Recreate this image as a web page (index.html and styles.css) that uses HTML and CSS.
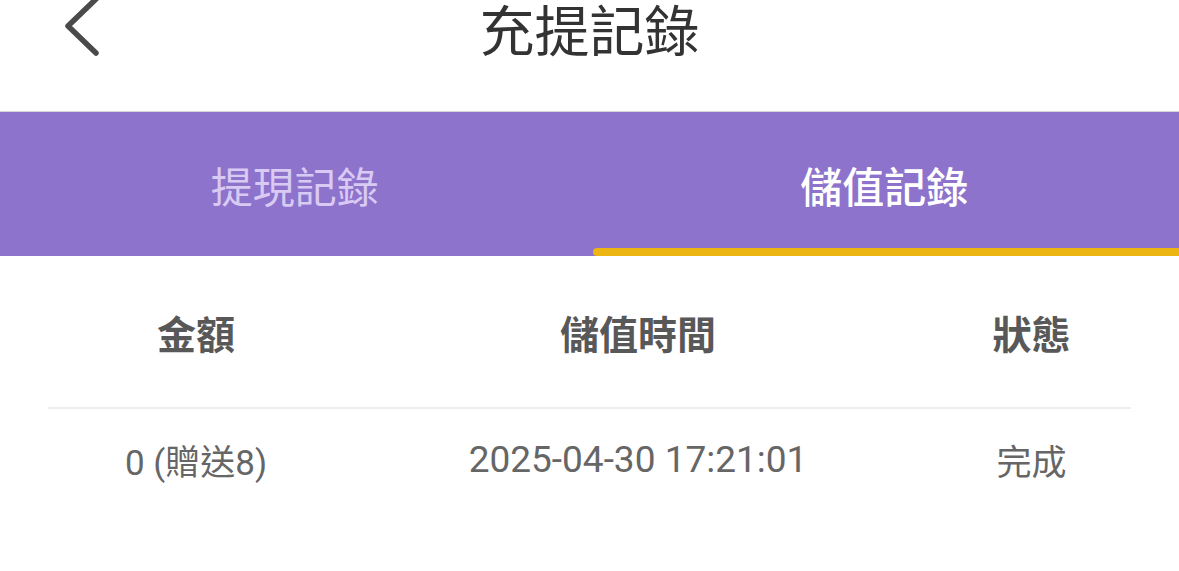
FILE: index.html
```html
<!DOCTYPE html>
<html lang="zh-Hant">
<head>
    <meta charset="UTF-8">
    <meta name="viewport" content="width=device-width, initial-scale=1.0">
    <title>充提記錄</title>
    <link rel="stylesheet" href="styles.css">
</head>
<body>
    <div class="header">
        <span class="back">
            <svg width="40" height="60" viewBox="0 0 40 60">
                <path d="M34 3 L6 30 L34 57" fill="none" stroke="#4a4a4a" stroke-width="5.5" stroke-linecap="round" stroke-linejoin="round"/>
            </svg>
        </span>
        <h1 class="title">充提記錄</h1>
    </div>
    <div class="tabs">
        <div class="tab">提現記錄</div>
        <div class="tab active">儲值記錄</div>
    </div>
    <div class="table">
        <div class="row head">
            <div class="cell">金額</div>
            <div class="cell">儲值時間</div>
            <div class="cell">狀態</div>
        </div>
        <div class="row">
            <div class="cell">0 (贈送8)</div>
            <div class="cell date">2025-04-30 17:21:01</div>
            <div class="cell">完成</div>
        </div>
    </div>
</body>
</html>
```

FILE: styles.css
```css
body {
    margin: 0;
    font-family: Roboto, "Noto Sans CJK TC", sans-serif;
    background: #ffffff;
    overflow: hidden;
}
.header {
    position: relative;
    height: 111px;
    border-bottom: 1px solid #d4d4d4;
    text-align: center;
}
.back {
    position: absolute;
    left: 62px;
    top: -4px;
}
.title {
    margin: 0;
    font-family: "Noto Sans CJK TC", sans-serif;
    font-weight: 400;
    font-size: 55px;
    line-height: 54px;
    color: #333;
}
.tabs {
    display: flex;
    height: 144px;
    background: #8e73cc;
}
.tab {
    flex: 1;
    display: flex;
    justify-content: center;
    align-items: center;
    font-family: "Noto Sans CJK TC", sans-serif;
    font-size: 42px;
    color: #d8caf2;
    position: relative;
}
.tab.active {
    color: #ffffff;
    font-weight: 500;
}
.tab.active::after {
    content: "";
    position: absolute;
    left: 3px;
    right: 0;
    bottom: 0;
    height: 8px;
    border-radius: 4px 0 0 4px;
    background: #edb512;
}
.table {
    margin: 0 48px;
}
.row {
    display: grid;
    grid-template-columns: 296px 588px 1fr;
    text-align: center;
}
.row.head {
    height: 151px;
    align-items: center;
    border-bottom: 2px solid #eeeeee;
    font-family: "Noto Sans CJK TC", sans-serif;
    font-weight: 700;
    font-size: 39px;
    color: #585858;
}
.row:not(.head) {
    height: 100px;
    align-items: center;
    font-size: 35px;
    color: #666;
}
.row .date {
    font-size: 37px;
}
```
